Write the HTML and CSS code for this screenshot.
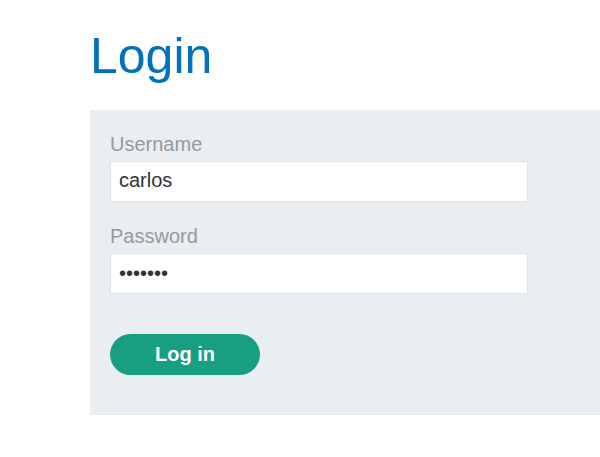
FILE: index.html
```html
<!DOCTYPE html>
<html>
<head>
<meta charset="utf-8">
<link rel="stylesheet" href="styles.css">
</head>
<body>
<div class="page">
  <h1 class="title">Login</h1>
  <form class="login-form">
    <label class="field-label">Username</label>
    <div class="input">carlos</div>
    <label class="field-label second">Password</label>
    <div class="input dots">&#8226;&#8226;&#8226;&#8226;&#8226;&#8226;&#8226;</div>
    <button class="btn" type="button">Log in</button>
  </form>
</div>
</body>
</html>
```
FILE: styles.css
```css
html, body {
  margin: 0;
  padding: 0;
  background: #ffffff;
  font-family: "Liberation Sans", Arial, sans-serif;
}
.page {
  padding-left: 90px;
  padding-top: 28px;
}
.title {
  margin: 0 0 25px 0;
  font-size: 50px;
  font-weight: normal;
  line-height: 57px;
  color: #0071bc;
}
.login-form {
  background: #e9eef1;
  padding: 20px 20px 40px 20px;
  display: flex;
  flex-direction: column;
  align-items: flex-start;
}
.field-label {
  display: block;
  font-size: 20px;
  line-height: 28px;
  color: #999999;
  margin-bottom: 3px;
}
.field-label.second {
  margin-top: 20px;
}
.input {
  box-sizing: border-box;
  width: 418px;
  height: 41px;
  background: #ffffff;
  border: 1px solid #dfe3e6;
  padding: 0 8px;
  font-size: 20px;
  line-height: 37px;
  color: #333333;
}
.input.dots {
  font-size: 20px;
  line-height: 38px;
}
.btn {
  margin-top: 40px;
  width: 150px;
  height: 41px;
  border: none;
  border-radius: 21px;
  background: #189e81;
  color: #ffffff;
  font-family: "Liberation Sans", Arial, sans-serif;
  font-weight: bold;
  font-size: 20px;
  padding: 0;
}
```
